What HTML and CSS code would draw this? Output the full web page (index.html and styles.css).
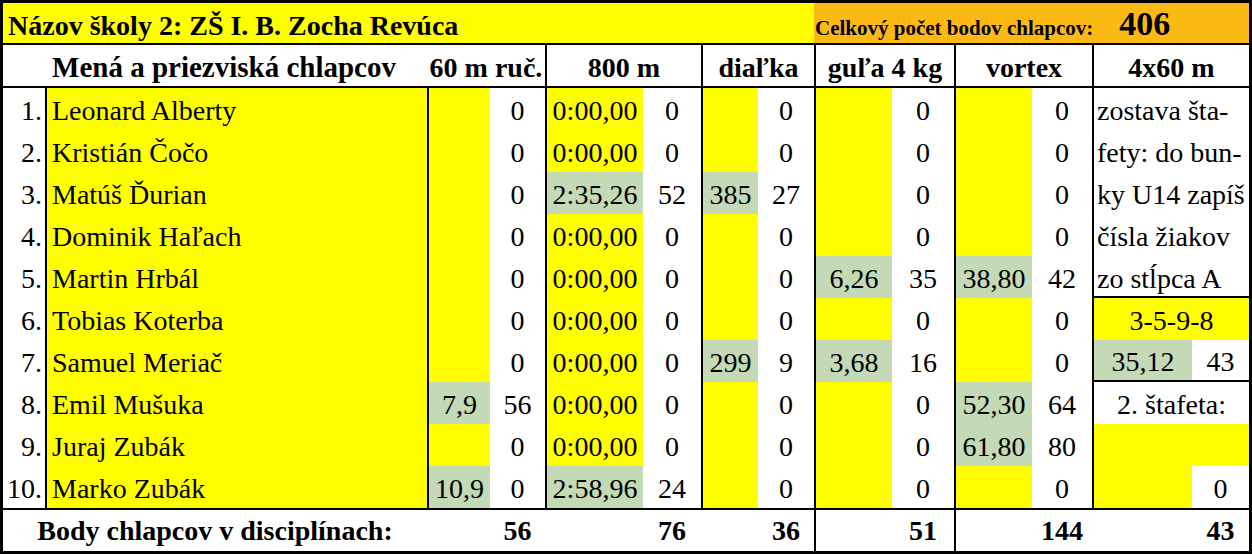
FILE: index.html
```html
<!DOCTYPE html>
<html lang="sk">
<head>
<meta charset="utf-8">
<title>Body chlapcov</title>
<link rel="stylesheet" href="styles.css">
</head>
<body>
<div class="sheet">
  <div class="title">Názov školy 2: ZŠ I. B. Zocha Revúca</div>
  <div class="total"><span class="total-label">Celkový počet bodov chlapcov:</span><span class="total-val">406</span></div>

  <div class="hd hd-name">Mená a priezviská chlapcov</div>
  <div class="hd s2">60 m ruč.</div>
  <div class="hd s2 bl">800 m</div>
  <div class="hd s2 bl">diaľka</div>
  <div class="hd s2 bl">guľa 4 kg</div>
  <div class="hd s2 bl">vortex</div>
  <div class="hd s2 bl">4x60 m</div>

  <div class="note bl">zostava šta-<br>fety: do bun-<br>ky U14 zapíš<br>čísla žiakov<br>zo stĺpca A</div>

  <div class="c num">1.</div><div class="c name">Leonard Alberty</div>
  <div class="c y bl"></div><div class="c">0</div>
  <div class="c y bl">0:00,00</div><div class="c">0</div>
  <div class="c y bl"></div><div class="c">0</div>
  <div class="c y bl"></div><div class="c">0</div>
  <div class="c y bl"></div><div class="c">0</div>

  <div class="c num">2.</div><div class="c name">Kristián Čočo</div>
  <div class="c y bl"></div><div class="c">0</div>
  <div class="c y bl">0:00,00</div><div class="c">0</div>
  <div class="c y bl"></div><div class="c">0</div>
  <div class="c y bl"></div><div class="c">0</div>
  <div class="c y bl"></div><div class="c">0</div>

  <div class="c num">3.</div><div class="c name">Matúš Ďurian</div>
  <div class="c y bl"></div><div class="c">0</div>
  <div class="c g bl">2:35,26</div><div class="c">52</div>
  <div class="c g bl">385</div><div class="c">27</div>
  <div class="c y bl"></div><div class="c">0</div>
  <div class="c y bl"></div><div class="c">0</div>

  <div class="c num">4.</div><div class="c name">Dominik Haľach</div>
  <div class="c y bl"></div><div class="c">0</div>
  <div class="c y bl">0:00,00</div><div class="c">0</div>
  <div class="c y bl"></div><div class="c">0</div>
  <div class="c y bl"></div><div class="c">0</div>
  <div class="c y bl"></div><div class="c">0</div>

  <div class="c num">5.</div><div class="c name">Martin Hrbál</div>
  <div class="c y bl"></div><div class="c">0</div>
  <div class="c y bl">0:00,00</div><div class="c">0</div>
  <div class="c y bl"></div><div class="c">0</div>
  <div class="c g bl">6,26</div><div class="c">35</div>
  <div class="c g bl">38,80</div><div class="c">42</div>

  <div class="c num">6.</div><div class="c name">Tobias Koterba</div>
  <div class="c y bl"></div><div class="c">0</div>
  <div class="c y bl">0:00,00</div><div class="c">0</div>
  <div class="c y bl"></div><div class="c">0</div>
  <div class="c y bl"></div><div class="c">0</div>
  <div class="c y bl"></div><div class="c">0</div>
  <div class="c y bl s2">3-5-9-8</div>

  <div class="c num">7.</div><div class="c name">Samuel Meriač</div>
  <div class="c y bl"></div><div class="c">0</div>
  <div class="c y bl">0:00,00</div><div class="c">0</div>
  <div class="c g bl">299</div><div class="c">9</div>
  <div class="c g bl">3,68</div><div class="c">16</div>
  <div class="c y bl"></div><div class="c">0</div>
  <div class="c g bl bb">35,12</div><div class="c bb">43</div>

  <div class="c num">8.</div><div class="c name">Emil Mušuka</div>
  <div class="c g bl">7,9</div><div class="c">56</div>
  <div class="c y bl">0:00,00</div><div class="c">0</div>
  <div class="c y bl"></div><div class="c">0</div>
  <div class="c y bl"></div><div class="c">0</div>
  <div class="c g bl">52,30</div><div class="c">64</div>
  <div class="c bl s2">2. štafeta:</div>

  <div class="c num">9.</div><div class="c name">Juraj Zubák</div>
  <div class="c y bl"></div><div class="c">0</div>
  <div class="c y bl">0:00,00</div><div class="c">0</div>
  <div class="c y bl"></div><div class="c">0</div>
  <div class="c y bl"></div><div class="c">0</div>
  <div class="c g bl">61,80</div><div class="c">80</div>
  <div class="c y bl s2"></div>

  <div class="c num">10.</div><div class="c name">Marko Zubák</div>
  <div class="c g bl">10,9</div><div class="c">0</div>
  <div class="c g bl">2:58,96</div><div class="c">24</div>
  <div class="c y bl"></div><div class="c">0</div>
  <div class="c y bl"></div><div class="c">0</div>
  <div class="c y bl"></div><div class="c">0</div>
  <div class="c y bl"></div><div class="c">0</div>

  <div class="ft ft-label">Body chlapcov v disciplínach:</div>
  <div class="ft"></div><div class="ft">56</div>
  <div class="ft"></div><div class="ft">76</div>
  <div class="ft"></div><div class="ft">36</div>
  <div class="ft bl"></div><div class="ft">51</div>
  <div class="ft bl"></div><div class="ft">144</div>
  <div class="ft"></div><div class="ft">43</div>
</div>
</body>
</html>
```

FILE: styles.css
```css
* {
  box-sizing: border-box;
}

html, body {
  margin: 0;
  padding: 0;
  background: #ffffff;
}

body {
  font-family: "Liberation Serif", "Times New Roman", serif;
  color: #000;
}

.sheet {
  width: 1252px;
  height: 554px;
  border: 3px solid #000;
  display: grid;
  grid-template-columns: 42px 382px 63px 55px 98px 58px 57px 56px 78px 62px 78px 60px 100px 57px;
  grid-template-rows: 42px 43px repeat(10, 42px) 43px;
  background: #fff;
}

.title {
  grid-column: 1 / span 8;
  background: #ffff00;
  border-bottom: 2px solid #000;
  font-weight: bold;
  font-size: 28px;
  padding-left: 5px;
  padding-top: 5px;
  display: flex;
  align-items: center;
  white-space: nowrap;
}

.total {
  grid-column: 9 / span 6;
  background: #fdb913;
  border-bottom: 2px solid #000;
  display: flex;
  align-items: baseline;
  padding-top: 2px;
  font-weight: bold;
  white-space: nowrap;
}

.total-label {
  font-size: 21px;
  padding-left: 1px;
}

.total-val {
  font-size: 34px;
  margin-left: 26px;
}

.hd {
  font-weight: bold;
  font-size: 28px;
  border-bottom: 2px solid #000;
  padding-top: 4px;
  display: flex;
  align-items: center;
  justify-content: center;
  white-space: nowrap;
}

.hd-name {
  grid-column: 1 / span 2;
  padding-left: 18px;
  font-size: 29px;
}

.s2 {
  grid-column: span 2;
}

.bl {
  border-left: 2px solid #000;
}

.bb {
  border-bottom: 2px solid #000;
}

.note {
  grid-column: 13 / span 2;
  grid-row: 3 / span 5;
  font-size: 28px;
  line-height: 42px;
  padding-left: 3px;
  padding-top: 2px;
  border-bottom: 2px solid #000;
  white-space: nowrap;
}

.c {
  font-size: 28px;
  padding-top: 4px;
  display: flex;
  align-items: center;
  justify-content: center;
  white-space: nowrap;
}

.num {
  justify-content: flex-end;
  padding-right: 3px;
}

.name {
  background: #ffff00;
  justify-content: flex-start;
  padding-left: 5px;
  border-left: 2px solid #000;
}

.y {
  background: #ffff00;
}

.g {
  background: #c4d9b6;
}

.ft {
  border-top: 2px solid #000;
  font-weight: bold;
  font-size: 28px;
  display: flex;
  align-items: center;
  justify-content: center;
  white-space: nowrap;
}

.ft-label {
  grid-column: 1 / span 2;
}
```
